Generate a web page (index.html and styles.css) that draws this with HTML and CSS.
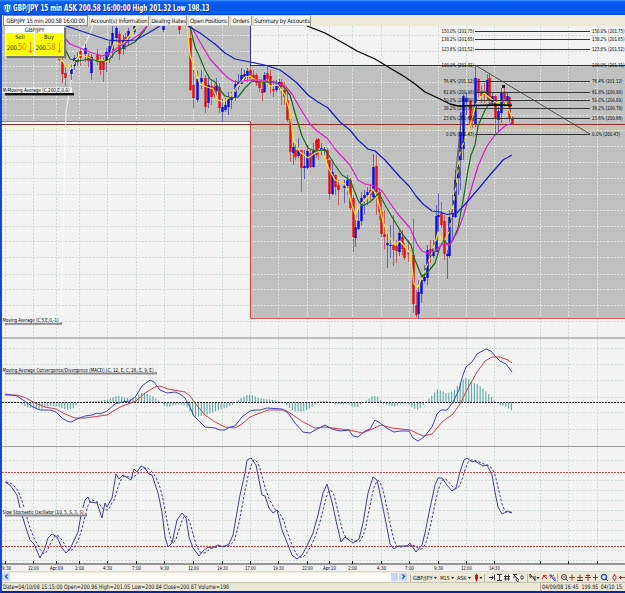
FILE: index.html
```html
<!DOCTYPE html>
<html lang="en">
<head>
<meta charset="utf-8">
<title>GBP/JPY 15 min</title>
<link rel="stylesheet" href="styles.css">
</head>
<body>
<div class="window">
  <header class="title">
    <svg class="logo" width="9" height="10" viewBox="0 0 9 10"><circle cx="4.5" cy="5" r="4.2" fill="#4d96d8"/><path d="M1 2.5h7M4.5 1v8M2.5 3v3M6.5 3v3M3 8h3" stroke="#e4f4ff" fill="none"/></svg>
    <svg width="200" height="15" viewBox="0 0 200 15"><text x="0" y="11.3" textLength="196.5" lengthAdjust="spacingAndGlyphs">GBP/JPY 15 min ASK 200.58 16:00:00 High 201.32 Low 198.13</text></svg>
  </header>
  <nav class="tabs">
    <span class="tab t1">GBP/JPY 15 min 200.58 16:00:00</span>
    <span class="tab t2">Account(s) Information</span>
    <span class="tab t3">Dealing Rates</span>
    <span class="tab t4">Open Positions</span>
    <span class="tab t5">Orders</span>
    <span class="tab t6">Summary by Accounts</span>
  </nav>
  <main class="chart">
    <svg id="plot" width="623" height="545" viewBox="2 26 623 545"></svg>
    <section class="quote">
      <div class="pair">GBP/JPY</div>
      <div class="sides">
        <div class="side"><b>Sell</b><p>200.<em>50</em><svg width="5" height="12" viewBox="0 0 5 12"><path d="M2.5 0v10M.5 8l2 3 2-3" stroke="#ef8f00" fill="none"/></svg></p></div>
        <div class="side"><b>Buy</b><p>200.<em>58</em><svg width="5" height="12" viewBox="0 0 5 12"><path d="M2.5 0v10M.5 8l2 3 2-3" stroke="#ef8f00" fill="none"/></svg></p></div>
      </div>
    </section>
  </main>
  <div class="bar">
    <div class="scroll"><i class="sb"><svg width="7" height="7" viewBox="0 0 7 7"><path d="M4.5 1.5l-2 2 2 2" stroke="#274a86" stroke-width="1.2" fill="none"/></svg></i><span class="track"></span><i class="sb thumb"></i><i class="sb"><svg width="7" height="7" viewBox="0 0 7 7"><path d="M2.5 1.5l2 2-2 2" stroke="#274a86" stroke-width="1.2" fill="none"/></svg></i></div>
    <svg class="tools" width="218" height="11" viewBox="407 571 218 11">
      <path d="M410.5 573v8M484.5 573v8M527.5 573v8M557.5 573v8" stroke="#b9b5a0"/>
      <g font-size="5.6" fill="#111"><text x="413" y="578.6" textLength="19.5" lengthAdjust="spacingAndGlyphs">GBP/JPY</text><text x="440" y="578.6" textLength="9.5" lengthAdjust="spacingAndGlyphs">M15</text><text x="457" y="578.6" textLength="9.5" lengthAdjust="spacingAndGlyphs">ASK</text></g>
      <path d="M434 576h3l-1.5 2zM451 576h3l-1.5 2zM468 576h3l-1.5 2zM479.5 576h3l-1.5 2zM536.500 576h3l-1.500 2z" fill="#111"/>
      <path d="M476.500 572.500v8" stroke="#d00000"/><rect x="475" y="574" width="3" height="4.500" fill="#e01010"/>
      <path d="M487 572.500h36v8h-36z" fill="#f7f6ef" stroke="#d5d1bd" stroke-width=".5"/>
      <g fill="none" stroke="#222" stroke-width=".9"><path d="M489 576.500h4M491.500 574.500l2 2-2 2M494.500 573.500v6"/><path d="M497 573.500h5M499.500 574v5M497 579.500h5"/><path d="M505.500 573.500v6M508.500 573.500v6M504 575.500h6M504 578h6"/><path d="M513 573.500h4M513 576h3M514 574l5 5M517 577.500a1.500 1.500 0 1 0 2 2"/><ellipse cx="522" cy="576.500" rx="1.200" ry="1.800"/><path d="M530 573l5 6M530 573v3.500l2-1M533 576h3M535 577v3"/></g>
      <path d="M542 578l2-4 3 1M543 574l4 4" stroke="#d72020" fill="none"/><path d="M549.500 574l2 2v-2zM552 577l3 3v-3z" stroke="#4a48c8" fill="none"/><path d="M550 577l4-3" stroke="#d72020"/>
      <circle cx="564" cy="576" r="2.500" fill="#fff" stroke="#333"/><path d="M562.500 576h3M566 578l2 2" stroke="#b52020"/>
      <g stroke="#c92020"><path d="M569 576.500h6M572 573.500v6"/><path d="M577 576.500h6M580 573.500v6"/><path d="M577 579.500h6" stroke="#333"/><path d="M585 576.500h6M588 573v7M586 574.500h4"/><path d="M593 576.500h5M595.500 573.500v6"/></g>
      <circle cx="604" cy="576" r="2.800" fill="#8ea2e8" stroke="#2a3eb5"/><path d="M602.500 576h3M604 574.500v3" stroke="#fff"/><path d="M606 578l2 2" stroke="#333"/>
      <path d="M614.500 573v7" stroke="#c92020"/><ellipse cx="614.500" cy="576.500" rx="1.500" ry="2.300" fill="#fff" stroke="#c92020"/><path d="M619 576.500h6M621 575l-1.500 1.500 1.500 1.500" stroke="#c92020" fill="none"/>
    </svg>
  </div>
  <footer class="status">
    <svg width="230" height="8" viewBox="0 0 230 8"><text x="1" y="6.3" textLength="226" lengthAdjust="spacingAndGlyphs">Date=04/10/08 15:15:00 Open=200.96 High=201.05 Low=200.84 Close=200.87 Volume=198</text></svg>
    <svg class="cursor" width="85" height="8" viewBox="0 0 85 8"><text x="1" y="6.3" textLength="37" lengthAdjust="spacingAndGlyphs">04/09/08 16:45</text><text x="41" y="6.3" textLength="17" lengthAdjust="spacingAndGlyphs">199.95</text><text x="60.500" y="6.3" textLength="23" lengthAdjust="spacingAndGlyphs">04/10 15:</text></svg>
  </footer>
</div>
<script src="chart.js"></script>
</body>
</html>
```
FILE: styles.css
```css
* { box-sizing: border-box; }
body { margin: 0; background: #f3f3f3; font-family: "DejaVu Sans Condensed", "Liberation Sans", sans-serif; overflow: hidden; }
.window { width: 625px; height: 593px; display: flex; flex-direction: column; border-left: 2px solid #1747d4; border-bottom: 3px solid #08289c; background: #ece9d8; }
.title { margin-left: -2px; height: 15px; flex: none; display: flex; align-items: center; gap: 1px; padding-left: 3px; background: linear-gradient(#3d95ff 0, #0a5df0 2px, #0054e6 9px, #0963fa 13px, #0640c0 15px); }
.title text { font: bold 8.4px "DejaVu Sans Condensed", sans-serif; fill: #fff; text-shadow: 1px 1px 0 #0a2a88; }
.tabs { height: 11px; flex: none; display: flex; gap: 1px; align-items: stretch; padding-left: 1px; background: #ece9d8; }
.tab { background: #f7f6f2; border: 1px solid #d2cfc0; border-right-color: #99968a; font-size: 6px; line-height: 9px; height: 11px; white-space: nowrap; color: #111; letter-spacing: -.22px; display: flex; justify-content: center; }
.t1 { width: 85px; border-color: #8a877a; background: #fff; letter-spacing: -.32px; }
.t2 { width: 60px; }
.t3 { width: 37px; }
.t4 { width: 41px; }
.t5 { width: 22px; }
.t6 { width: 58px; letter-spacing: -.28px; }
.chart { position: relative; height: 545px; flex: none; background: #f3f3f3; }
.chart > svg { display: block; }
#plot text { font-family: "DejaVu Sans Condensed", sans-serif; font-size: 5.5px; fill: #000; }
.quote { position: absolute; left: 3px; top: 0; width: 59px; height: 30px; background: #fff; box-shadow: 2px 2px 1px #777; padding: 0 1px 1px; color: #222; }
.pair { font-size: 6px; line-height: 7px; text-align: center; letter-spacing: -.2px; }
.sides { display: flex; gap: 1px; height: 22px; }
.side { flex: 1; background: #ffff00; text-align: center; }
.side b { display: block; font: 5.8px/8px "DejaVu Sans Condensed", sans-serif; }
.side p { margin: 0; display: flex; align-items: center; justify-content: center; height: 13px; font-size: 6.3px; letter-spacing: -.4px; }
.side em { font-style: normal; font-size: 8px; color: #f07000; }
.side svg { margin-left: 2px; }
.bar { height: 12px; flex: none; display: flex; align-items: center; background: #ece9d8; border-top: 1px solid #dedbcb; border-bottom: 1px solid #c4c1b0; }
.scroll { display: flex; width: 405px; height: 9px; background: #fbfaf6; }
.sb { width: 8px; height: 8px; background: #c5d7fb; border-radius: 1px; display: flex; align-items: center; justify-content: center; }
.thumb { width: 7px; margin-right: 1px; }
.track { flex: 1; }
.tools { flex: none; font-family: "DejaVu Sans Condensed", sans-serif; }
.status { flex: 1; display: flex; justify-content: space-between; align-items: center; background: #ece9d8; }
.status text { font-size: 6.2px; fill: #111; }
.cursor { border-left: 1px solid #aaa79a; }
```
FILE: chart.js
```js
const svg = document.getElementById('plot');
let out = '';
const line = (x1, y1, x2, y2, c, extra = '') => { out += `<line x1="${x1}" y1="${y1}" x2="${x2}" y2="${y2}" stroke="${c}" ${extra}/>`; };
const rect = (x, y, w, h, c) => { out += `<rect x="${x}" y="${y}" width="${w}" height="${h}" fill="${c}"/>`; };
const text = (x, y, len, t) => { out += `<text x="${x}" y="${y}" textLength="${len}" lengthAdjust="spacingAndGlyphs">${t}</text>`; };
const pairs = s => s.trim().split(' ').map(p => p.split(',').map(Number));
const poly = (s, c, extra = '') => { out += `<polyline points="${s}" fill="none" stroke="${c}" stroke-linejoin="round" ${extra}/>`; };
const at = (pts, x) => {
  if (x <= pts[0][0]) return pts[0][1];
  for (let i = 1; i < pts.length; i++) if (x <= pts[i][0]) {
    const [a, b] = [pts[i - 1], pts[i]];
    return a[1] + (b[1] - a[1]) * (x - a[0]) / (b[0] - a[0]);
  }
  return pts[pts.length - 1][1];
};

// Price zones
rect(2, 26, 623, 545, '#f3f3f3');
rect(2, 26, 248, 95, '#c0c0c0');
rect(250, 66, 375, 253, '#c0c0c0');
rect(2, 125, 248, 5.5, '#f5f5e0');
rect(250, 125, 375, 5.5, '#c7c3ae');
rect(2, 122, 248, 3, '#fff');

// Grid
const cols = [5, 33, 56, 79, 107, 136, 164, 193, 222, 250, 278, 307, 329, 352, 381, 409, 438, 466, 494, 540, 568, 597];
const dash = 'stroke-dasharray="2 1.5"', soft = '#d0dcd2', pale = '#dfe6df';
cols.forEach(x => {
  const [a, b] = x < 250 ? [26, 121] : [66, 318];
  if (a > 26) line(x + .5, 26, x + .5, a, soft, dash);
  line(x + .5, a, x + .5, b, pale, dash);
  line(x + .5, b, x + .5, 564, soft, dash);
});
[35, 51, 66, 82, 99, 115, 130, 146, 162, 178, 194, 210, 226, 241, 257, 274, 289, 305, 321].forEach(y => {
  line(2, y + .5, 250, y + .5, y < 121 ? pale : soft, dash);
  line(250, y + .5, 625, y + .5, y > 66 && y < 318 ? pale : soft, dash);
});
[348, 364, 380, 397, 412, 429, 460, 480, 490, 500, 510, 520, 530, 540, 550, 560].forEach(y => line(2, y + .5, 625, y + .5, soft, dash));

// Zone borders
line(2, 121.5, 251, 121.5, '#e06060');
line(250.5, 121, 250.5, 319, '#cc4040');
line(250, 318.5, 625, 318.5, '#e05a5a');
line(2, 124.5, 625, 124.5, '#8a2b2b');
line(250.5, 26, 250.5, 66, '#3030a0');
line(250, 65.5, 625, 65.5, '#202090');
poly('93,26 72,75 66,112 65,145 61,315', '#fff', 'stroke-width=".8"');
poly('83,46 64,82', '#fff', 'stroke-width=".8"');

// Candles: x, high, low, body top, body bottom
const up = `71,64,80,69,74 74,55,70,58,66 77,52,66,57,62 85,44,62,48,54 91,54,80,57,73 106,48,72,52,60 109,40,63,46,57 112,26,58,33,50 116,26,42,28,38 123,35,55,40,49 128,28,45,31,38 134,24,34,25,32 163,24,32,25,30
197,71,102,79,100 201,70,89,78,82 208,75,108,85,103 216,78,97,86,91 222,99,121,107,112 225,98,112,105,110 228,92,115,98,107 231,92,109,97,100 235,80,101,84,97 238,74,90,82,87 241,68,84,75,84 244,70,80,74,79 247,68,82,71,76 264,72,93,75,92 276,80,92,86,90 279,79,90,82,88
293,143,165,147,153 298,138,158,150,156 304,150,179,166,168 307,145,169,151,168 313,143,168,151,167 321,143,155,148,150 324,147,157,149,151 332,160,195,172,194 344,180,203,186,188 347,175,195,180,186 355,220,247,227,238 358,210,230,221,229 361,192,225,198,221 364,190,215,195,198 367,187,205,192,195 373,154,200,167,197
387,230,268,243,245 390,225,258,245,246 399,228,256,233,252 418,280,319,292,314 421,275,303,280,294 424,265,283,277,281 427,245,285,250,278 433,240,258,252,256 436,205,250,216,252 438,193,235,215,217 447,250,279,254,256 449,210,258,217,256 452,195,240,213,217 455,170,218,180,217 458,150,195,167,178 460,112,190,132,160 463,94,160,96,149 466,92,115,98,102 475,66,127,78,124 487,74,100,80,96 492,93,106,96,102 498,107,132,111,120 501,88,123,92,113 507,93,108,96,100`;
const down = `59,45,61,50,60 62,56,83,62,74 65,65,86,73,78 80,48,66,51,58 88,53,67,56,61 97,49,65,54,62 100,56,75,60,70 103,57,82,60,70 119,31,60,34,54 125,33,50,37,43 179,24,34,25,30 190,30,91,38,90 193,70,108,85,98
205,75,113,78,107 211,80,105,86,97 214,84,98,87,95 219,83,113,87,108 250,66,79,70,78 253,70,82,75,80 256,73,86,75,83 259,79,92,82,88 262,80,101,89,93 267,66,86,73,79 270,70,94,76,86 273,80,97,89,91 281,79,105,82,87 284,82,105,90,97 287,90,122,100,120
290,115,162,119,152 295,142,160,150,157 301,150,192,150,168 310,150,168,153,167 316,138,158,140,155 318,138,160,139,148 327,148,165,150,159 329,160,200,160,194 335,174,195,175,187 338,180,205,185,190 350,178,210,180,208 353,195,252,198,237 370,184,200,190,195 376,155,215,166,192 379,188,220,192,212 381,200,237,212,234 384,210,249,234,237
393,215,266,245,250 396,240,263,246,251 402,230,255,237,249 404,243,260,248,258 408,240,262,253,254 413,219,313,255,304 416,290,317,305,315 430,240,263,249,256 441,202,228,213,225 444,215,260,221,254 470,100,128,101,125 472,110,128,115,121 478,78,97,79,93 481,86,103,91,96 484,83,103,91,95 489,73,106,78,100 495,95,134,96,118 504,88,106,92,103 509,96,122,97,118 512,116,125,117,124`;
const candles = (s, c, wick) => s.split(/\s+/).forEach(k => {
  const [x, h, l, t, b] = k.split(',').map(Number);
  line(x + .5, h, x + .5, l, wick, 'stroke-width=".8"');
  rect(x - .7, t, 2.4, b - t, c);
});
candles(up, '#0808e8', '#4a4ab4');
candles(down, '#e80c0c', '#c84444');

// Moving averages
const w = 'stroke-width="1.25"';
const yellow = '56,56 62,60 66,67 73,63 80,55 88,57 95,61 102,60 108,62 114,42 122,45 130,35 137,26 187,26 190,55 195,70 200,84 207,87 213,89 218,100 223,102 230,97 236,88 245,77 250,76 255,80 262,80 270,86 278,85 285,95 290,112 293,138 300,152 308,158 315,153 322,150 328,167 335,180 345,184 349,193 352,205 355,214 360,205 368,197 373,189 378,200 383,222 390,238 395,245 400,241 410,253 414,284 418,287 422,277 430,258 436,240 438,232 443,243 449,232 453,205 457,180 460,153 465,138 470,126 476,104 484,93 490,98 497,103 504,100 508,108 512,118';
const yp = yellow.split(' ');
poly(yp.slice(0, 13).join(' '), '#f4e72c', w);
poly(yp.slice(13).join(' '), '#f4e72c', w);
poly('422,277 430,258 436,240', '#333', 'stroke-dasharray="3 4"');
poly('449,232 453,205 457,180 460,153 465,136', '#222', 'stroke-dasharray="5 4"');
poly('454,190 458,150 462,112', '#444', 'stroke-width=".8"');
poly('70,70 76,61 81,55', '#fff', 'stroke-dasharray="3 3"');
poly('235,92 240,84 246,78', '#ddd', 'stroke-dasharray="3 3"');
poly('64,47 70,59 78,61 90,59 102,62 110,59 115,52 125,47 135,42 144,31 147,26', '#187018', w);
poly('190,26 195,47 200,58 205,70 210,79 215,82 220,90 225,96 232,98 238,97 245,88 252,81 262,82 275,82 283,86 290,95 295,113 302,136 308,148 315,151 325,150 330,157 335,165 342,175 350,180 358,200 362,206 370,202 376,196 379,193 385,205 395,222 403,235 411,245 415,260 422,277 428,272 435,263 440,247 444,240 449,246 453,240 458,228 464,195 468,170 471,155 475,145 478,126 485,110 490,103 495,104 505,105 512,104', '#187018', w);
poly('64,37 70,44 80,48 90,52 102,56 112,52 120,46 131,40 140,34 147,26', '#d820d0', w);
poly('191,26 200,42 210,59 220,70 228,78 235,82 243,81 250,80 262,80 275,83 285,86 292,94 300,108 310,124 317,131 327,138 335,149 350,165 358,180 365,184 375,186 382,191 390,203 397,213 410,228 417,244 422,251 427,253 435,251 443,244 450,244 457,233 463,217 470,193 478,166 487,146 495,135 505,126 512,123', '#d820d0', w);
poly('66,26 75,29 90,34 108,40 120,41 136,40 150,32 160,26', '#1820c0', w);
poly('188,26 200,33 215,44 225,53 235,59 250,62 265,65 280,70 287,75 297,83 308,95 318,102 328,108 340,122 350,130 358,140 368,149 375,151 385,160 400,177 409,186 416,196 423,204 432,211 440,212 447,214.500 457,213 467,202 480,187 490,175 503,160 512,155', '#1820c0', w);
poly('307,26 325,33 345,44 357,51 375,59 390,68 405,77 415,84 425,92 440,99 450,104 458,106 475,105.500 495,105 512,105.500', '#000', 'stroke-width="1.3"');
rect(502, 85, 3, 3, '#222');

// Fibonacci levels
const fib = [[31, '150.0% (201.75)'], [39, '138.2% (201.65)'], [49, '123.6% (201.52)'], [65, '100.0% (201.31)'], [81, '76.4% (201.12)'], [92, '61.8% (200.98)'], [100, '50.0% (200.89)'], [108, '38.2% (200.78)'], [118, '23.6% (200.66)'], [134, '0.0% (200.43)']];
fib.forEach(([y, t], i) => {
  if (i !== 3) line(475, y + .5, 590, y + .5, '#333');
  const len = i < 4 ? 32.5 : i < 9 ? 30.5 : 28;
  text(474 - len, y + 2.4, len, t);
  text(592, y + 2.4, len, t);
});
line(475, 65, 590, 134, '#333', 'stroke-width=".8"');

// Panel separators
line(2, 338, 625, 338, '#a8a8a8', 'stroke-width="1.5"');
line(2, 446.5, 625, 446.5, '#a0a0a0');

// MACD
const hist = pairs('5,1 15,1 20,-1 28,-5 40,-7 50,-3 56,-4 67,-7 73,-6 78,-1 85,1 100,2 108,3 114,6 118,7 125,5 130,4 135,5 140,9 144,10 148,8 152,7 157,3 160,1 165,-4 170,-4 175,-2 180,-2 186,-3 189,-8 194,-14 198,-14 205,-13 212,-10 220,-7 227,-5 233,-2 240,4 248,8 253,7 260,4 270,3 280,1 285,-1 290,-6 294,-9 302,-9 308,-7 314,-3 318,1 325,2 330,1 335,-2 342,-2 348,-1 352,-4 357,-5 362,-1 368,3 373,7 378,6 383,-1 388,-3 395,-4 400,-2 408,-1 413,-6 418,-7 422,-4 428,3 433,8 437,13 442,12 447,9 454,12 460,20 464,24 467,25 472,20 478,18 484,13 490,7 496,0 500,-2 505,-4 512,-8');
for (let x = 5; x < 514; x += 2.845) {
  const h = at(hist, x);
  line(x.toFixed(2), 402.5, x.toFixed(2), (402.5 - h).toFixed(1), '#58a8a4', 'stroke-width="1.1"');
}
line(2, 402.5, 625, 402.5, '#222', 'stroke-dasharray="2 1"');
poly('5,395 17,395 26,398 35,403 45,407 56,409 65,414 75,418 85,418 107,415 120,407 136,401 145,393 155,387 160,386 168,389 185,392 190,396 195,403 205,415 215,422 225,427 235,428 242,424 250,417 260,413 268,410 285,410 293,415 303,422 315,428 325,427 340,429 350,430 362,433 370,430 381,425 392,428 410,430 423,436 432,434 437,428 442,422 453,414 460,404 468,388 477,372 485,361 492,357 500,357 508,360 512,363', '#c84048');
poly('5,394 17,396 26,402 33,407 40,410 50,410 56,412 62,418 67,421 71,422 77,419 85,416 92,415 97,413 100,414 107,411 115,404 122,402 130,401 136,396 142,386 150,380 154,382 160,390 167,393 175,392 180,394 185,398 190,407 194,416 200,422 205,427 215,428 220,430 225,430 230,427 235,426 242,417 250,411 255,410 260,410 267,408 282,409 288,413 295,423 303,432 310,433 317,429 325,425 332,429 340,431 349,430 353,436 358,437 365,431 370,429 375,420 380,423 388,429 394,432 400,431 409,431 413,438 418,441 424,437 432,427 437,414 441,410 447,410 453,402 459,390 462,378 466,367 472,362 477,354 486,349 491,351 495,356 500,361 506,364 512,372', '#4040c0');

// Slow stochastic: %K line and its smoothed %D
line(2, 472.5, 625, 472.5, '#cc5050', 'stroke-dasharray="2 1"');
line(2, 546.5, 625, 546.5, '#cc4040', 'stroke-dasharray="2 1"');
const k = '5,482 10,485 17,495 20,508 25,525 30,540 34,544 40,558 45,548 48,538 52,534 57,537 62,548 66,553 70,549 78,532 81,515 85,500 88,497 90,502 97,503 102,518 105,503 107,507 112,498 116,474 119,479 123,475 131,480 134,469 137,472 141,466 145,468 149,474 152,475 158,493 162,512 165,537 168,547 172,543 177,520 182,513 186,518 189,537 193,548 199,556 203,551 208,547 212,548 218,545 223,547 229,544 233,535 240,495 245,473 247,460 251,458 256,465 258,475 262,495 265,496 269,508 273,513 277,510 282,530 288,545 292,555 297,559 302,555 307,546 313,533 318,515 323,493 327,484 332,502 337,525 341,542 345,537 353,543 359,539 363,523 368,493 373,477 377,480 382,503 387,528 390,544 394,549 398,546 407,546 410,543 416,552 422,545 425,533 430,508 435,485 438,478 442,478 447,485 452,491 456,488 460,472 464,460 467,458 472,462 475,461 483,466 487,465 492,475 495,492 498,507 502,514 508,511 512,513';
const kp = pairs(k);
let d = '';
for (let x = 6; x <= 512; x += 2) d += `${x},${((at(kp, x - 1) + at(kp, x - 4) + at(kp, x - 7)) / 3).toFixed(1)} `;
poly(d.trim(), '#383890', 'stroke-dasharray="2.500 1.800"');
poly(k, '#404098');

// Indicator captions
const caption = (y, w, t) => {
  rect(5, y + 2, w - 1, 2.5, '#8c8c8c');
  rect(2, y - 4, w, 6.5, '#f3f3f3');
  text(2.5, y + 1.7, w - 2, t);
};
rect(5, 93, 69, 2.4, '#111');
rect(2, 87.5, 70, 5.5, '#f3f3f3');
text(2.5, 92.2, 67, 'M-Moving Average (C,200,E,0,0)');
caption(320.3, 58, 'Moving Average (C,5,E,0,-1)');
caption(370, 153, 'Moving Average Convergence/Divergence (MACD) (C, 12, E, C, 26, E, 9, E)');
caption(512, 83, 'Slow Stochastic Oscillator (10, 5, S, 3, S)');

// Time axis
line(2, 564, 625, 564, '#777', 'stroke-width="1.500"');
const times = ['9:30', '22:00', 'Apr.09', '2:00', '4:30', '7:00', '9:30', '12:00', '14:30', '17:00', '19:30', '22:00', 'Apr.10', '2:00', '4:30', '7:00', '9:30', '12:00', '14:30'];
cols.forEach((x, i) => {
  line(x + .5, 561, x + .5, 564, '#222');
  if (!times[i]) return;
  const len = times[i].length === 4 ? 9 : times[i].length === 5 ? 10.5 : 13;
  text(i ? x + .5 - len / 2 : 2, 569.7, len, times[i]);
});
svg.innerHTML = out;
```
